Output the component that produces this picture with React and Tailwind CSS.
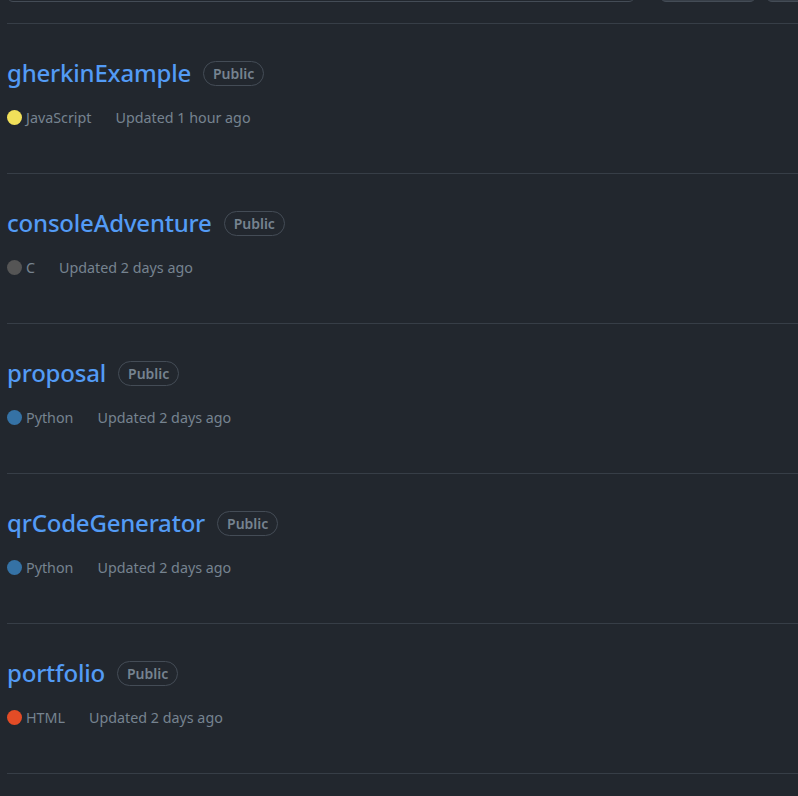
const repos = [
  { name: 'gherkinExample', lang: 'JavaScript', color: 'bg-[#f1e05a]', updated: 'Updated 1 hour ago' },
  { name: 'consoleAdventure', lang: 'C', color: 'bg-[#555555]', updated: 'Updated 2 days ago' },
  { name: 'proposal', lang: 'Python', color: 'bg-[#3572a5]', updated: 'Updated 2 days ago' },
  { name: 'qrCodeGenerator', lang: 'Python', color: 'bg-[#3572a5]', updated: 'Updated 2 days ago' },
  { name: 'portfolio', lang: 'HTML', color: 'bg-[#e34c26]', updated: 'Updated 2 days ago' },
];

function RepoRow({ repo }) {
  return (
    <li className="h-[150px] border-t border-[#373e47] pt-[30px]">
      <div className="flex items-center">
        <a className="text-[24px] leading-[38px] font-medium tracking-[-0.2px] text-[#539bf5]" href="#">
          {repo.name}
        </a>
        <span className="ml-[12px] flex h-[25px] items-center rounded-full border border-[#444c56] px-[9px] text-[14px] font-semibold text-[#768390]">
          Public
        </span>
      </div>
      <div className="mt-[15px] flex items-center text-[14.3px] text-[#768390]">
        <span className={`h-[15px] w-[15px] rounded-full ${repo.color}`} />
        <span className="ml-[4px] mr-[24px]">{repo.lang}</span>
        <span>{repo.updated}</span>
      </div>
    </li>
  );
}

export default function App() {
  return (
    <div className="min-h-[796px] overflow-hidden bg-[#22272e] font-['Segoe_UI','Noto_Sans',sans-serif]">
      <div className="relative h-[23px]">
        <div className="absolute left-[7px] top-[-30px] h-[32px] w-[628px] rounded-md border border-[#444c56]" />
        <div className="absolute left-[660px] top-[-30px] h-[32px] w-[96px] rounded-md border border-[#444c56] bg-[#373e47]" />
        <div className="absolute left-[766px] top-[-30px] h-[32px] w-[96px] rounded-md border border-[#444c56] bg-[#373e47]" />
      </div>
      <ul className="ml-[7px]">
        {repos.map((repo) => (
          <RepoRow key={repo.name} repo={repo} />
        ))}
        <li className="border-t border-[#373e47]" />
      </ul>
    </div>
  );
}
